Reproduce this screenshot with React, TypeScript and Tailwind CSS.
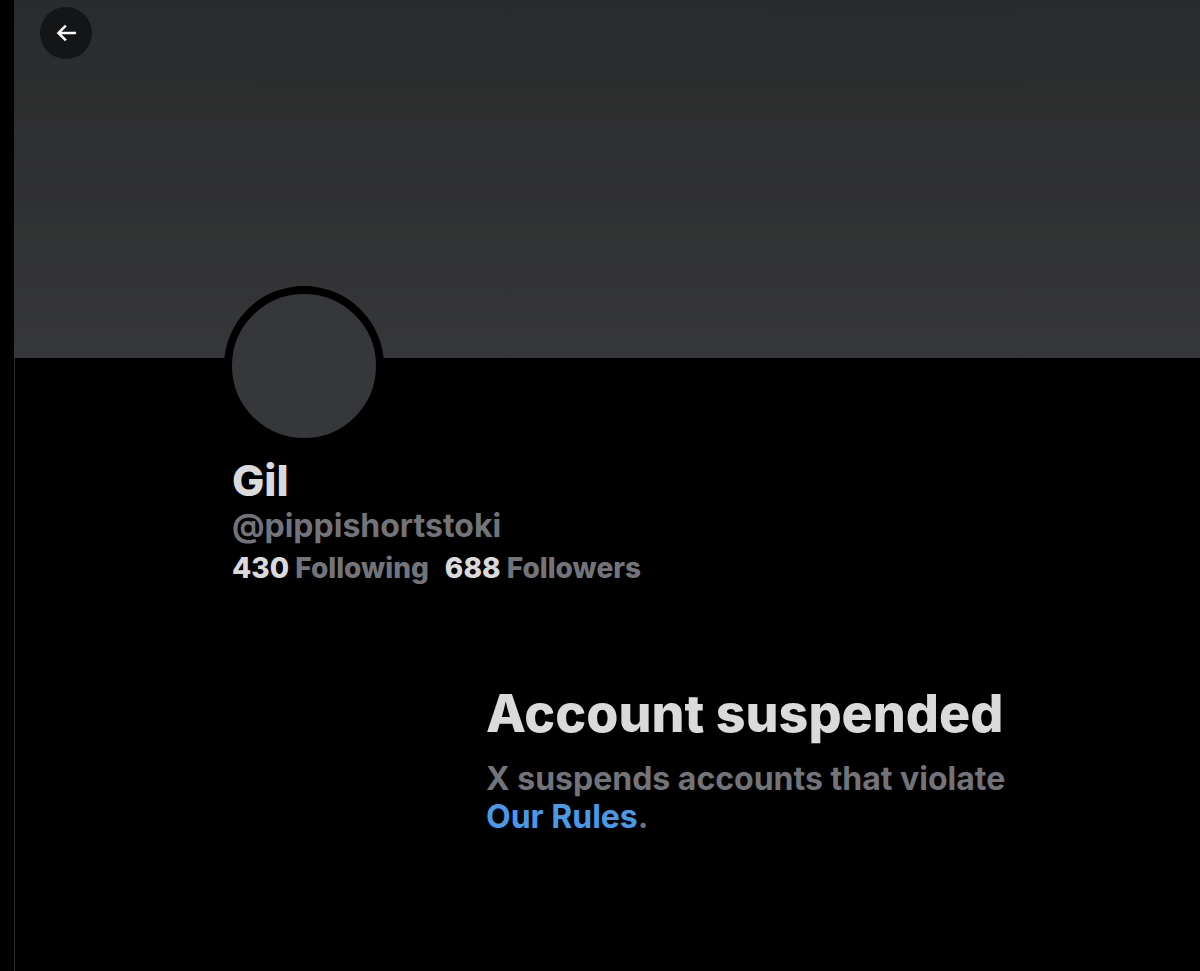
import React from 'react';

interface Stat {
  label: string;
  value: number;
}

interface Profile {
  name: string;
  handle: string;
  stats: Stat[];
}

const profile: Profile = {
  name: 'Gil',
  handle: '@pippishortstoki',
  stats: [
    { label: 'Following', value: 430 },
    { label: 'Followers', value: 688 },
  ],
};

const BackButton: React.FC = () => (
  <button
    type="button"
    aria-label="Back"
    className="flex size-[52px] items-center justify-center rounded-full bg-[#141517] text-white transition-colors hover:bg-[#26282b]"
  >
    <svg viewBox="0 0 24 24" className="size-[26px]" fill="currentColor" stroke="currentColor" strokeWidth="0.4" aria-hidden="true">
      <path d="M7.414 13l5.043 5.04-1.414 1.42L3.586 12l7.457-7.46 1.414 1.42L7.414 11H21v2H7.414z" />
    </svg>
  </button>
);

const Banner: React.FC = () => (
  <div className="-ml-px h-[358px] bg-[linear-gradient(#2a2b2d,#2c2d2d_25%,#2f2f31_35%,#2c3033_40%,#2f2f32_45%,#2d3134_50%,#302f33_54%,#2d3235_59%,#323333_63%,#333336_75%,#36373a)] px-[26px] pt-[7px]">
    <BackButton />
  </div>
);

const ProfileHeader: React.FC<{ profile: Profile }> = ({ profile }) => (
  <section className="pl-[209px]">
    {/* Avatar overlaps the banner */}
    <div className="-mt-[72px] size-40 rounded-full border-8 border-black bg-[#36373a]" />

    <div className="px-2 pt-2">
      <h1 className="text-[43px] leading-[52px] font-extrabold text-[#dadadb]">{profile.name}</h1>
      <p className="text-[32px] leading-[40px] font-bold text-[#727479]">{profile.handle}</p>
      <div className="flex flex-wrap gap-x-4 text-[28px] leading-[44px]">
        {profile.stats.map((stat) => (
          <a key={stat.label} href="#" className="font-extrabold text-[#727479] hover:underline">
            <span className="text-[#dadadb]">{stat.value}</span> {stat.label}
          </a>
        ))}
      </div>
    </div>
  </section>
);

const SuspendedNotice: React.FC = () => (
  <section className="mt-[90px] pb-10 pl-[471px]">
    <h2 className="text-[52px] leading-[68px] font-extrabold text-[#dadadb]">Account suspended</h2>
    <p className="mt-3 max-w-[540px] text-[32px] leading-[38px] font-bold text-[#727479]">
      X suspends accounts that violate{' '}
      <a href="#" className="text-[#4a99e9] hover:underline">
        Our Rules
      </a>
      .
    </p>
  </section>
);

const App: React.FC = () => {
  return (
    <div className="flex min-h-screen bg-black pl-[14px] font-['Inter',sans-serif]">
      <main className="flex-1 border-l border-[#2a2b2d]">
        <Banner />
        <ProfileHeader profile={profile} />
        <SuspendedNotice />
      </main>
    </div>
  );
};

export default App;
